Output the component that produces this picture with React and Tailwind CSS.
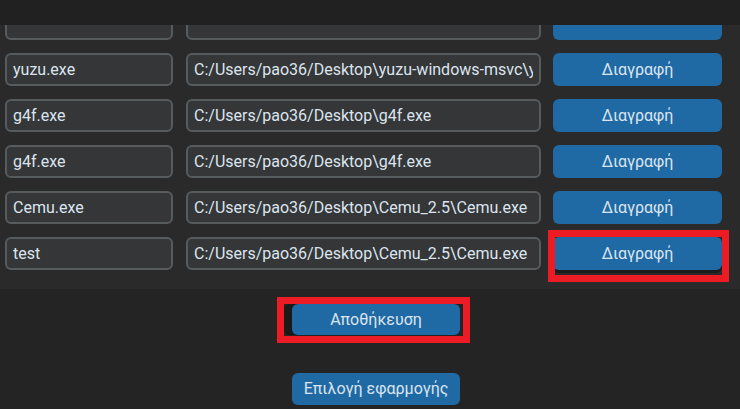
import React from 'react';

const apps = [
  { name: '', path: '', hidden: true },
  { name: 'yuzu.exe', path: 'C:/Users/pao36/Desktop\\yuzu-windows-msvc\\yuzu.exe' },
  { name: 'g4f.exe', path: 'C:/Users/pao36/Desktop\\g4f.exe' },
  { name: 'g4f.exe', path: 'C:/Users/pao36/Desktop\\g4f.exe' },
  { name: 'Cemu.exe', path: 'C:/Users/pao36/Desktop\\Cemu_2.5\\Cemu.exe' },
  { name: 'test', path: 'C:/Users/pao36/Desktop\\Cemu_2.5\\Cemu.exe' },
];

const Entry = ({ value, className }) => (
  <div className={`h-[33px] shrink-0 rounded-[6px] border-2 border-[#565b5e] bg-[#343638] pl-[6px] pr-[6px] text-[16px] leading-[29px] text-[#dce4ee] ${className}`}>
    <div className="overflow-hidden whitespace-nowrap">{value}</div>
  </div>
);

const App = () => {
  return (
    <div
      className="relative h-[409px] w-[740px] overflow-hidden bg-[#242424]"
      style={{ fontFamily: 'Roboto, "Noto Sans", sans-serif' }}
    >
      <div className="h-[25px] bg-[#212121]" />

      {/* scrolled list of apps */}
      <div className="h-[264px] overflow-hidden bg-[#2a2a2a]">
        <div className="-mt-[18px] flex flex-col gap-[13px] pl-[5px]">
          {apps.map((app, i) => (
            <div key={i} className="flex items-center">
              <Entry value={app.name} className="w-[168px]" />
              <Entry value={app.path} className="ml-[13px] w-[355px]" />
              <button
                className={`ml-[12px] h-[33px] w-[169px] rounded-[6px] bg-[#1f6aa5] text-[16px] text-[#dce4ee] ${i === apps.length - 1 ? 'shadow-[0_3px_0_0_#1c1c1c]' : ''}`}
              >
                {app.hidden ? '' : 'Διαγραφή'}
              </button>
            </div>
          ))}
        </div>
      </div>

      <div className="flex flex-col items-center pl-[12px]">
        <button className="mt-[15px] h-[31px] w-[168px] rounded-[6px] bg-[#1f6aa5] text-[16px] text-[#dce4ee] shadow-[-8px_0_0_0_#1a1a1a]">
          Αποθήκευση
        </button>
        <button className="mt-[38px] h-[32px] w-[168px] rounded-[6px] bg-[#1f6aa5] text-[16px] text-[#dce4ee]">
          Επιλογή εφαρμογής
        </button>
      </div>

      {/* red annotation frames */}
      <div className="pointer-events-none absolute left-[548px] top-[230px] h-[52px] w-[181px] border-[7px] border-[#ed1c24]" />
      <div className="pointer-events-none absolute left-[277px] top-[297px] h-[46px] w-[193px] border-[7px] border-[#ed1c24]" />
    </div>
  );
};

export default App;
